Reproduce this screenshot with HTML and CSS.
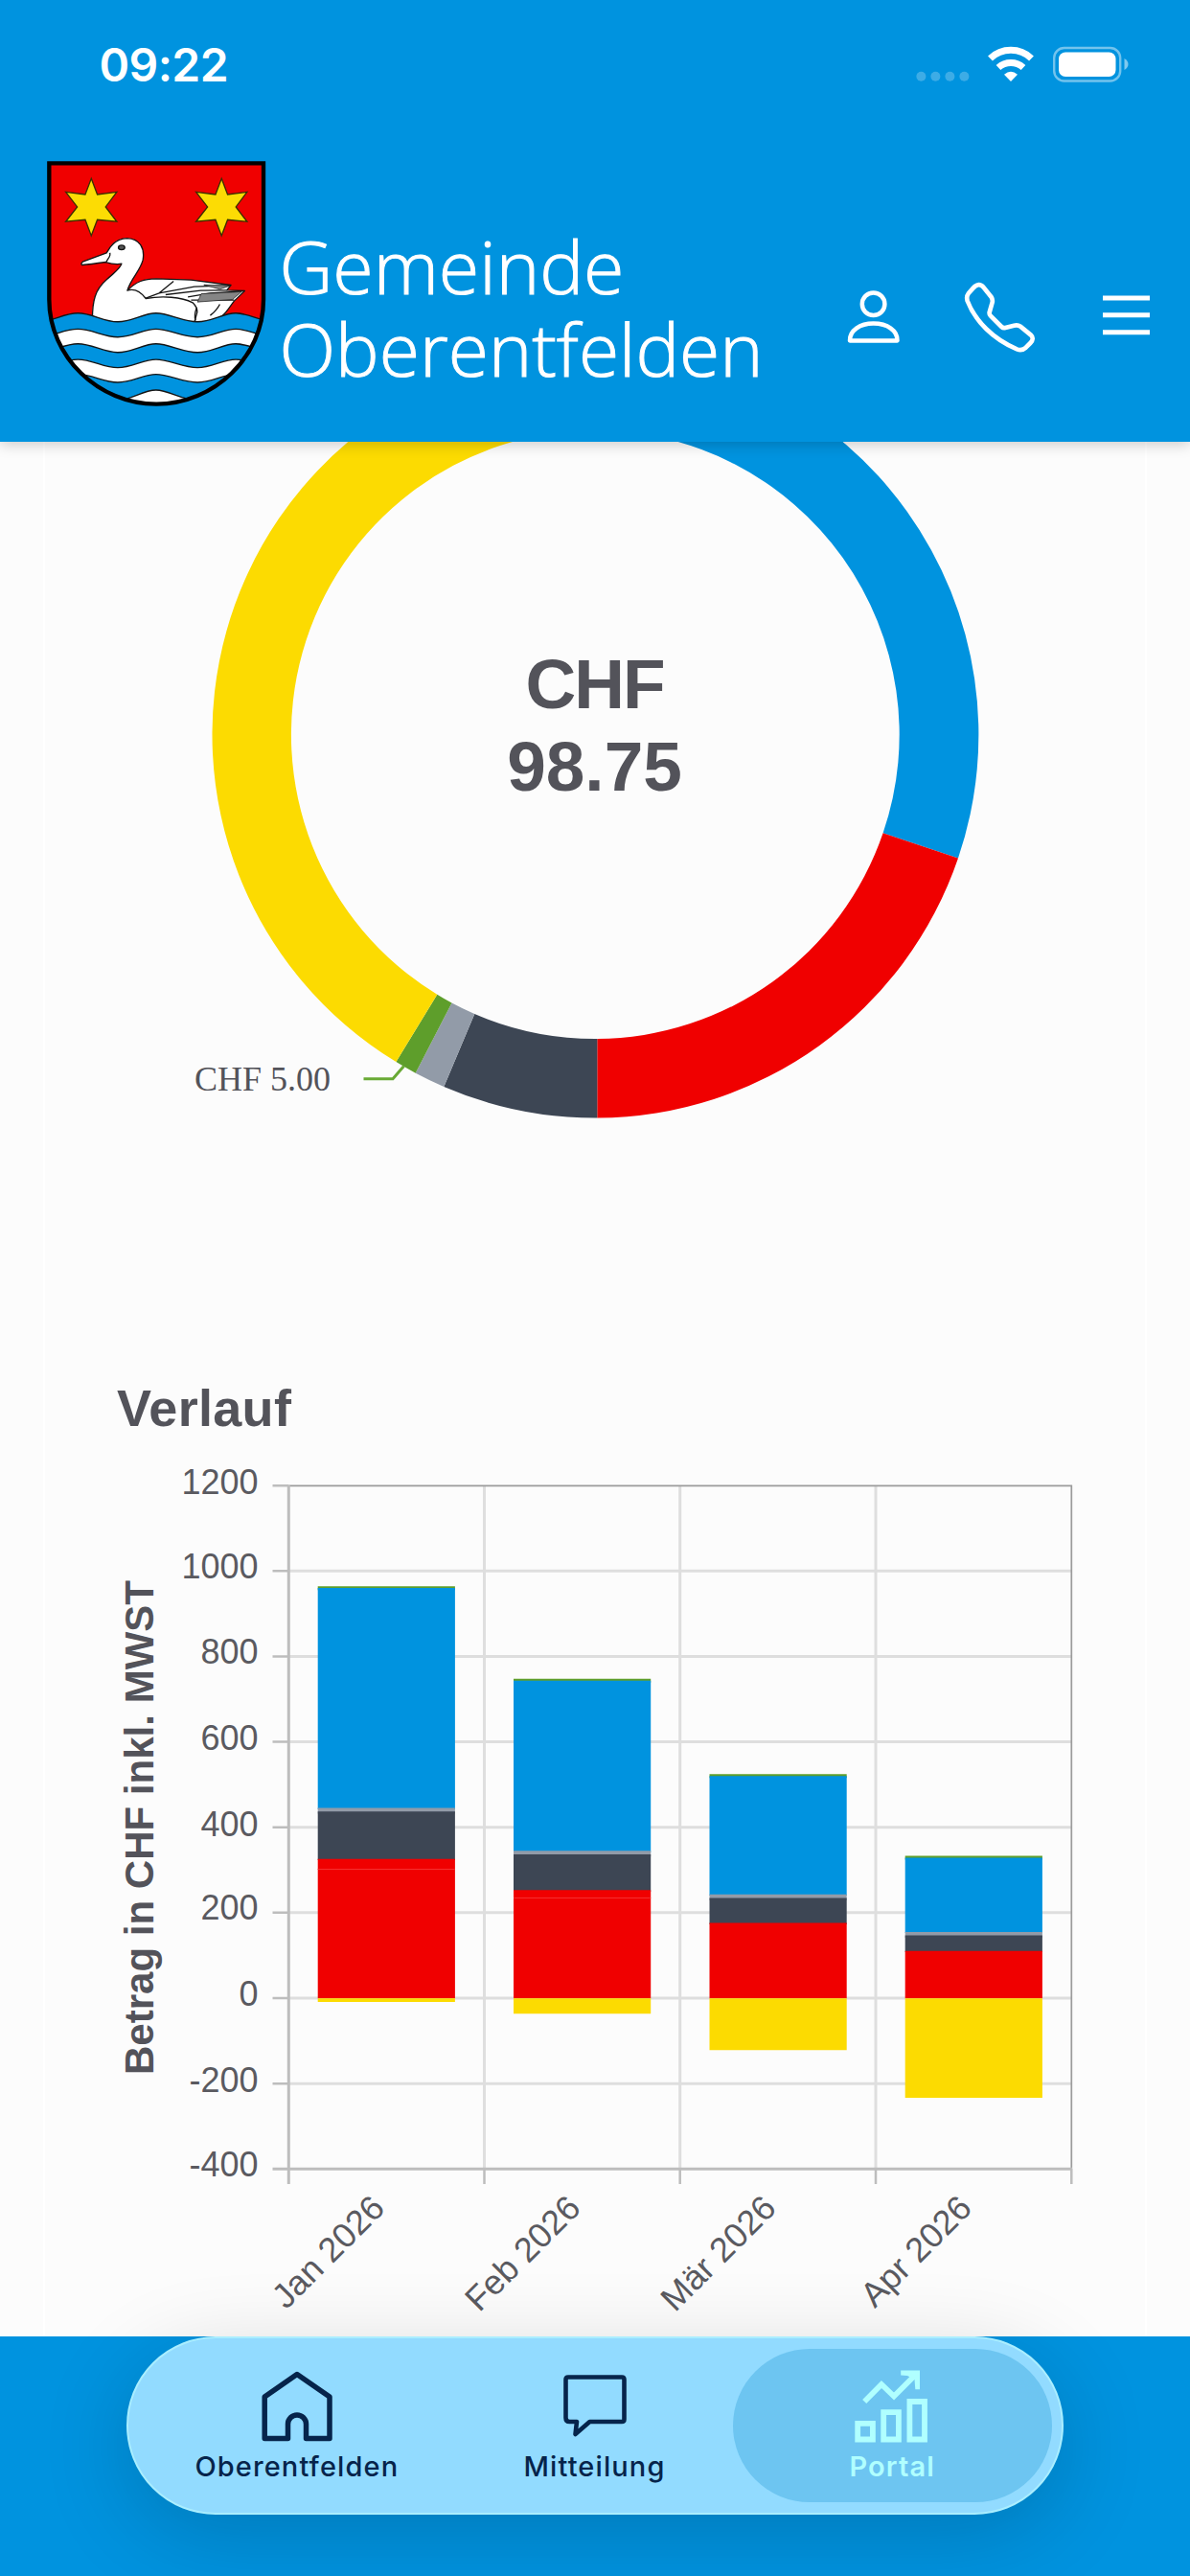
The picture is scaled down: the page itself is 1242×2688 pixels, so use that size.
FILE: index.html
```html
<!DOCTYPE html>
<html lang="de">
<head>
<meta charset="utf-8">
<title>Gemeinde Oberentfelden</title>
<link rel="stylesheet" href="styles.css">
</head>
<body>
<header class="header">
  <div class="status">
    <span class="time">09:22</span>
    <svg class="status-icons" viewBox="950 40 232 56" width="232" height="56">
      <g fill="#fff" fill-opacity=".24"><circle cx="961.4" cy="79.7" r="5"/><circle cx="976.4" cy="79.7" r="5"/><circle cx="991.4" cy="79.7" r="5"/><circle cx="1006.4" cy="79.7" r="5"/></g>
      <g fill="none" stroke="#fff" stroke-width="7"><path d="M1033.500 61a31 31 0 0 1 43 0"/><path d="M1042 70.500a19.500 19.500 0 0 1 26 0"/></g>
      <path d="M1055 85l-7-7.300q7-5.800 14 0z" fill="#fff"/>
      <rect x="1100.200" y="50" width="69" height="34.500" rx="10.500" fill="none" stroke="#fff" stroke-opacity=".45" stroke-width="2.400"/>
      <rect x="1105" y="54.500" width="59.500" height="25.500" rx="7" fill="#fff"/>
      <path d="M1173.500 61q4 2.500 4 6t-4 6z" fill="#fff" fill-opacity=".5"/>
    </svg>
  </div>
  <div class="brand-bar">
    <svg class="crest" viewBox="145 80 694 778" width="231" height="259">
      <defs><clipPath id="shield"><path d="M155 93H827V520C827 700 672 848 491 848S155 700 155 520Z"/></clipPath></defs>
      <g clip-path="url(#shield)">
        <path fill="#f00000" d="M145 80H839V858H145Z"/>
        <g fill="#fcdc04" stroke="#3b3000" stroke-width="4">
          <path id="star" d="M287 141L306 191L367 183L332 230L367 276L306 270L287 320L268 270L207 276L243 230L207 183L268 191Z"/>
          <use href="#star" x="408.500"/>
        </g>
        <g fill="#fff" stroke="#151515" stroke-width="4" stroke-linejoin="round">
          <path d="M400 492C428 464 452 455 490 455L600 459L725 475L712 491L768 493L735 525C715 550 704 580 660 588L608 595L450 560Z"/>
          <path d="M291 600C288 520 301 488 335 458C358 436 378 424 382 408C364 411 345 407 332 403C310 406 280 410 258 412Q253 408 260 402L335 374C350 345 368 328 400 328C440 330 455 360 449 396C440 432 412 452 400 492C424 484 445 500 458 517C510 508 570 512 605 530Q620 545 619 560L608 600Z"/>
          <path d="M458 516L500 500L545 463M500 500L610 480L720 476M520 505L630 492L712 491M590 512L660 500L760 494M600 522L735 522M345 374C350 384 338 392 334 403M690 535Q680 555 660 570M618 545Q608 570 614 586" fill="none"/>
          <path d="M632 502L758 496L730 520L620 528ZM640 474L722 477L690 488Z" fill="#858585" stroke-width="2"/>
          <ellipse cx="382" cy="357" rx="10" ry="7" fill="#555"/>
        </g>
        <g stroke="#151515" stroke-width="4">
          <path fill="#0093df" d="M120 590C165 590 200 563 245 563S325 590 370 590S450 563 490 563S575 590 620 590S700 563 740 563S820 590 865 590V900H120Z"/>
          <path fill="#fff" d="M120 638C165 638 200 613 245 613S325 638 370 638S450 613 490 613S575 638 620 638S700 613 740 613S820 638 865 638V900H120Z"/>
          <path fill="#0093df" d="M120 686C165 686 200 659 245 659S325 686 370 686S450 659 490 659S575 686 620 686S700 659 740 659S820 686 865 686V900H120Z"/>
          <path fill="#fff" d="M120 734C165 734 200 708 245 708S325 734 370 734S450 708 490 708S575 734 620 734S700 708 740 708S820 734 865 734V900H120Z"/>
          <path fill="#0093df" d="M120 780C165 780 200 755 245 755S325 780 370 780S450 755 490 755S575 780 620 780S700 755 740 755S820 780 865 780V900H120Z"/>
          <path fill="#fff" d="M370 836C410 836 450 804 490 804S570 836 620 836V900H370Z"/>
        </g>
      </g>
      <path fill="none" stroke="#000" stroke-width="13" d="M155 93H827V520C827 700 672 848 491 848S155 700 155 520Z"/>
    </svg>
    <svg class="wordmark" viewBox="280 225 520 200" width="520" height="200">
      <text x="291.500" y="307" textLength="360" lengthAdjust="spacingAndGlyphs">Gemeinde</text>
      <text x="291.500" y="393" textLength="505" lengthAdjust="spacingAndGlyphs">Oberentfelden</text>
    </svg>
    <svg class="actions" viewBox="880 280 330 100" width="330" height="100">
      <g fill="none" stroke="#fff" stroke-width="4.500" stroke-linejoin="round">
        <circle cx="911.600" cy="317.300" r="11.800"/>
        <path d="M887 355.500H936.500C937 345 926 337.500 911.700 337.500S886.500 345 887 355.500Z"/>
        <path stroke-width="14" transform="translate(820 0) scale(.33333)" d="M587 902Q605 882 620 900L644 930Q650 940 646 950L638 978Q637 984 641 988L676 1023Q681 1028 688 1026L715 1019Q727 1016 735 1022L767 1048Q780 1060 766 1074L752 1088Q740 1099 724 1093C650 1062 594 1006 569 942Q565 928 572 919Z"/>
        <path stroke-width="5" d="M1151 311H1200M1151 328.800H1200M1151 346.800H1200"/>
      </g>
    </svg>
  </div>
</header>

<main class="content">
  <section class="card">
    <svg class="donut" viewBox="47 461 1148 919" width="1148" height="919">
      <path fill="#0093df" d="M621.500 366.500A400 400 0 0 1 1000 895.500L921.600 869.300A317.500 317.500 0 0 0 621.500 449Z"/>
      <path fill="#f00000" d="M1000 895.500A400 400 0 0 1 623.300 1166.500V1084A317.500 317.500 0 0 0 921.600 869.300Z"/>
      <path fill="#3d4654" d="M623.300 1166.500A400 400 0 0 1 463.300 1133.900L495.300 1058A317.500 317.500 0 0 0 623.300 1084Z"/>
      <path fill="#929ba8" d="M463.300 1133.900A400 400 0 0 1 433.700 1119.700L471.500 1046.500A317.500 317.500 0 0 0 495.300 1058Z"/>
      <path fill="#5e9e2b" d="M433.700 1119.700A400 400 0 0 1 413.400 1108.100L456.300 1037.700A317.500 317.500 0 0 0 471.500 1046.500Z"/>
      <path fill="#fcdb01" d="M413.400 1108.100A400 400 0 0 1 621.500 366.500V449A317.500 317.500 0 0 0 456.300 1037.700Z"/>
      <path fill="none" stroke="#69aa35" stroke-width="3" d="M379.500 1125.700H410L421.500 1112.500"/>
      <text class="slice-label" x="203" y="1137.500">CHF 5.00</text>
      <text class="total" x="621.500" y="738.700" textLength="146">CHF</text>
      <text class="total" x="620.500" y="825">98.75</text>
    </svg>
    <h2 class="title">Verlauf</h2>
    <svg class="chart" viewBox="47 1510 1148 928" width="1148" height="928">
      <path class="grid" d="M302 1639.300H1118M302 1728.400H1118M302 1817.500H1118M302 1906.700H1118M302 1995.800H1118M302 2085H1118M302 2174.200H1118M505.500 1551V2262M709.700 1551V2262M914 1551V2262"/>
      <path class="frame" d="M301 1550.300H1118.300V2263"/>
      <path class="axis" d="M301.300 1550V2279M284.500 2263.300H1119"/>
      <path class="tick" d="M284.500 1550.300H301M284.500 1639.300H301M284.500 1728.400H301M284.500 1817.500H301M284.500 1906.700H301M284.500 1995.800H301M284.500 2085H301M284.500 2174.200H301M505.500 2263V2279M709.700 2263V2279M914 2263V2279M1118.300 2263V2279"/>
      <g fill="#5e9e2b"><path d="M331.700 1655.300h143.200v4h-143.200zM536 1751.800h143.200v4h-143.200zM740.500 1851.300h143.200v4h-143.200zM944.700 1936.500h143.200v4h-143.200z"/></g>
      <g fill="#0093df"><path d="M331.700 1657H474.900V1888H331.700zM536 1753.700H679.200V1933H536zM740.500 1853.200H883.700V1978H740.500zM944.700 1938.400H1087.900V2017H944.700z"/></g>
      <g fill="#929ba8"><path d="M331.700 1886.400h143.200v6h-143.200zM536 1931.300h143.200v6h-143.200zM740.500 1976.700h143.200v6h-143.200zM944.700 2016h143.200v6h-143.200z"/></g>
      <g fill="#3d4654"><path d="M331.700 1890.200H474.900V1941H331.700zM536 1935H679.200V1974H536zM740.500 1980.500H883.700V2008H740.500zM944.700 2019.500H1087.900V2037H944.700z"/></g>
      <g fill="#f00000"><path d="M331.700 1939.700H474.900V2085.300H331.700zM536 1972.300H679.200V2085.300H536zM740.500 2006.500H883.700V2085.300H740.500zM944.700 2035.700H1087.900V2085.300H944.700z"/></g>
      <path stroke="#f53030" stroke-width="1" d="M331.700 1950.500h143.200M536 1980.500h143.200"/>
      <g fill="#fcdb01"><path d="M331.700 2085.300H474.900V2089H331.700zM536 2085.300H679.200V2101.300H536zM740.500 2085.300H883.700V2139.300H740.500zM944.700 2085.300H1087.900V2189H944.700z"/></g>
      <g class="y-labels">
        <text x="269.500" y="1559.300">1200</text><text x="269.500" y="1646.500">1000</text><text x="269.500" y="1736.400">800</text><text x="269.500" y="1826.400">600</text><text x="269.500" y="1916.400">400</text><text x="269.500" y="2003.300">200</text><text x="269.500" y="2093.300">0</text><text x="269.500" y="2183.200">-200</text><text x="269.500" y="2270.500">-400</text>
      </g>
      <g class="x-labels">
        <text transform="translate(403.500 2306) rotate(-45)">Jan 2026</text><text transform="translate(607.800 2306) rotate(-45)">Feb 2026</text><text transform="translate(812 2306) rotate(-45)">Mär 2026</text><text transform="translate(1016.200 2306) rotate(-45)">Apr 2026</text>
      </g>
      <text class="axis-title" transform="translate(160 2165) rotate(-90)" textLength="516">Betrag in CHF inkl. MWST</text>
    </svg>
  </section>
</main>

<footer class="footer">
  <nav class="tabs">
    <div class="tab">
      <svg viewBox="270 2470 80 82" width="80" height="82"><path fill="none" stroke="currentColor" stroke-width="5.500" stroke-linejoin="round" d="M310 2477.500L344 2501V2544.500H319.500V2529.500a9.500 9.500 0 0 0-19 0V2544.500H276.200V2501Z"/></svg>
      <span>Oberentfelden</span>
    </div>
    <div class="tab">
      <svg viewBox="580 2470 80 82" width="80" height="82"><path fill="none" stroke="currentColor" stroke-width="4.600" stroke-linejoin="round" d="M592 2480.500H648Q650.500 2480.500 650.500 2483V2524.500Q650.500 2527 648 2527H614.500L599.500 2540L601 2527H593.500Q589.500 2527 589.500 2523V2483Q589.500 2480.500 592 2480.500Z"/></svg>
      <span>Mitteilung</span>
    </div>
    <div class="tab active">
      <svg viewBox="891 2470 80 82" width="80" height="82"><g fill="none" stroke="currentColor" stroke-width="5.800"><path d="M895.200 2528.800H910.900V2545.500H895.200ZM922.200 2517.200H937.900V2545.500H922.200ZM949.400 2506H965V2545.500H949.400Z"/><path d="M902.200 2506L920 2488L933 2500.500L955 2478.500"/></g><path fill="currentColor" d="M940.200 2473.500H960V2493.300H955.300L954.500 2483L947 2479L940.200 2478.500Z"/></svg>
      <span>Portal</span>
    </div>
  </nav>
</footer>
</body>
</html>
```
FILE: styles.css
```css
* { box-sizing: border-box; }
body {
  margin: 0;
  width: 1242px;
  height: 2688px;
  display: flex;
  flex-direction: column;
  overflow: hidden;
  background: #fcfcfc;
  color: #53535a;
  font-family: "Liberation Sans", Arial, sans-serif;
}
svg { display: block; flex: none; }
.header {
  height: 461px;
  flex: none;
  background: #0093df;
  color: #fff;
  box-shadow: 0 2px 14px rgba(0, 0, 0, .22);
  position: relative;
  z-index: 1;
}
.status {
  display: flex;
  justify-content: space-between;
  height: 140px;
  padding: 40px 60px 0 103.500px;
}
.time {
  font: 600 48px/56px Inter, sans-serif;
  letter-spacing: -.6px;
}
.brand-bar {
  display: flex;
  padding-left: 48.300px;
}
.crest { margin-top: 26.400px; }
.wordmark { margin: 85px 80px 0 .700px; }
.wordmark text {
  font-family: "Open Sans", sans-serif;
  font-weight: 300;
  font-size: 75px;
  fill: #fff;
  stroke: #fff;
  stroke-width: 1px;
}
.actions { margin-top: 140px; }
.content {
  flex: 1;
  min-height: 0;
  padding: 0 45px;
  overflow: hidden;
}
.card {
  display: flex;
  flex-direction: column;
  height: 100%;
  border: solid #fff;
  border-width: 0 2px;
}
.total {
  font-size: 73px;
  font-weight: 700;
  text-anchor: middle;
  fill: #53535a;
}
.slice-label {
  font-family: "Liberation Serif", serif;
  font-size: 36px;
  fill: #53535a;
}
.title {
  margin: 0;
  padding-left: 75px;
  height: 130px;
  font-size: 54px;
  line-height: 60px;
  letter-spacing: .3px;
  padding-top: 59px;
}
.grid, .frame, .axis, .tick { fill: none; }
.grid { stroke: #dedede; stroke-width: 3px; }
.frame { stroke: #9b9b9b; stroke-width: 1.700px; }
.axis { stroke: #bdbdbd; stroke-width: 3px; }
.tick { stroke: #bdbdbd; stroke-width: 2.500px; }
.y-labels, .x-labels {
  font-size: 36px;
  text-anchor: end;
  fill: #5a5a60;
}
.axis-title {
  font-size: 42px;
  font-weight: 700;
  fill: #53535a;
}
.footer {
  height: 250px;
  flex: none;
  padding-left: 131.500px;
  background: #0093df;
  position: relative;
}
.tabs {
  display: flex;
  justify-content: space-between;
  width: 978px;
  height: 186px;
  padding: 11px 10px;
  border: 2px solid #aaeeff;
  border-radius: 93px;
  background: #92dbff;
  color: #06244b;
  box-shadow: 0 22px 90px rgba(0, 0, 0, .17);
}
.tab {
  display: flex;
  flex-direction: column;
  align-items: center;
  width: 334px;
  margin-right: -22px;
  padding-top: 19px;
  border-radius: 80px;
  font: 500 29px/36px Inter, sans-serif;
  letter-spacing: 1.100px;
}
.tab:last-child { margin-right: 0; }
.tab span { margin-top: 4px; }
.tab.active {
  background: #6dc5f1;
  color: #b0ffff;
  font-weight: 600;
}
```
